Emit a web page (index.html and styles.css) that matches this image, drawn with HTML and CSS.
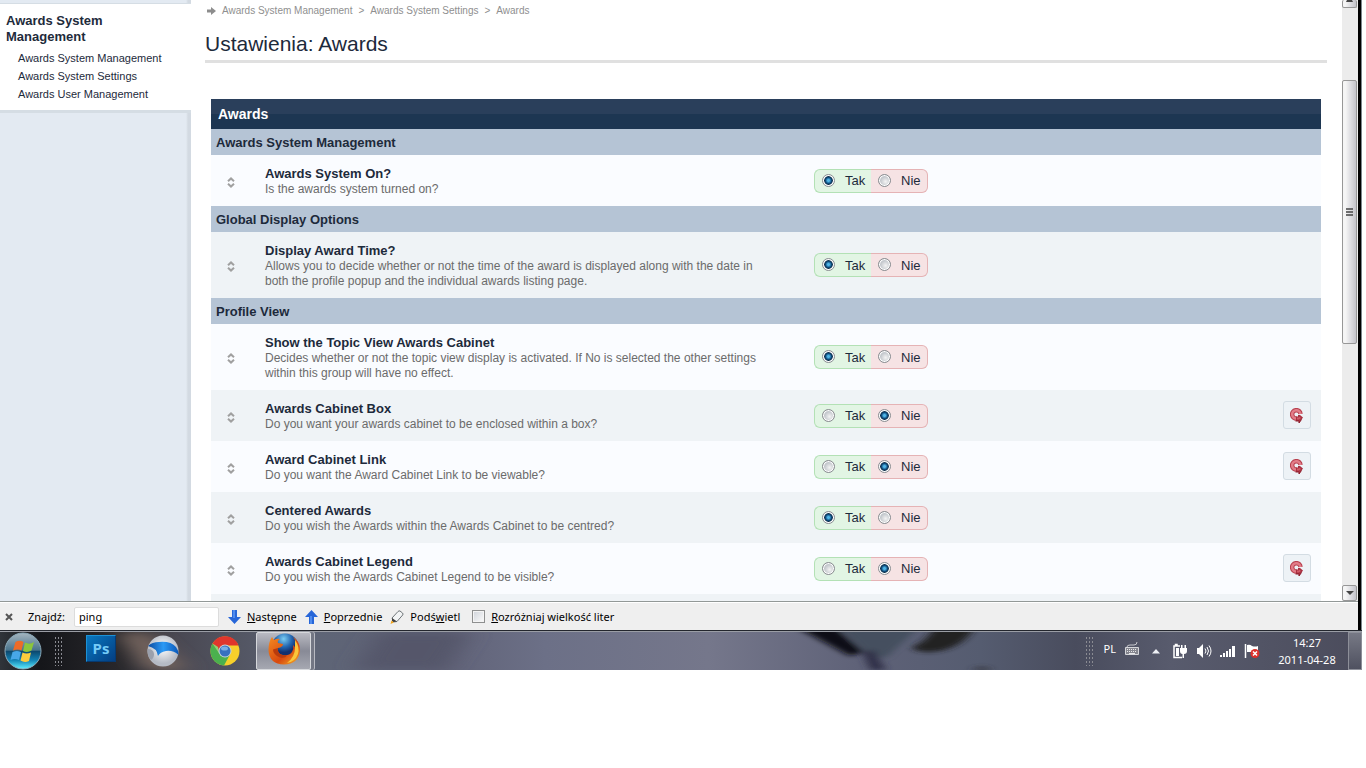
FILE: index.html
```html
<!DOCTYPE html>
<html lang="pl">
<head>
    <meta charset="UTF-8">
    <meta name="viewport" content="width=device-width, initial-scale=1.0">
    <title>Ustawienia: Awards</title>
    <link rel="stylesheet" href="styles.css">
</head>
<body>
    <svg class="symbols" aria-hidden="true">
        <symbol id="drag" viewBox="0 0 8 11">
            <path d="M1 4.2 4 1.4 7 4.2M1 6.8 4 9.6 7 6.8" fill="none" stroke="#a0a0a0" stroke-width="2"/>
        </symbol>
        <symbol id="revert" viewBox="0 0 14 16">
            <path d="M10.500 6A4.200 4.200 0 1 0 7 10.500" fill="none" stroke="#b8404e" stroke-width="4.500"/>
            <path d="M10.500 6A4.200 4.200 0 1 0 7 10.500" fill="none" stroke="#e27c88" stroke-width="2.500"/>
            <path d="M6 8.500h2V7h2l3 2.500L9 15v-2H6z" fill="#a83040"/>
            <path d="M7 9.500h2V8.500l2 1.500-2 1.500H7z" fill="#d05a66"/>
            <path d="M5.500 13H9v2l2.500-3.500" fill="none" stroke="#8c1c2a"/>
        </symbol>
    </svg>

    <div class="browser">
        <div class="page">
            <nav class="sidebar">
                <div class="menu">
                    <h2>Awards System Management</h2>
                    <ul>
                        <li><a href="#">Awards System Management</a></li>
                        <li><a href="#">Awards System Settings</a></li>
                        <li><a href="#">Awards User Management</a></li>
                    </ul>
                </div>
            </nav>

            <main class="content">
                <div class="breadcrumb">
                    <svg width="9" height="8" viewBox="0 0 9 8"><path d="M0 2.500h4V0l5 4-5 4V5.500H0z" fill="#8d8d8d"/></svg>
                    <a href="#">Awards System Management</a>
                    <span>&gt;</span>
                    <a href="#">Awards System Settings</a>
                    <span>&gt;</span>
                    <a href="#">Awards</a>
                </div>
                <h1>Ustawienia: Awards</h1>

                <table class="settings">
                    <colgroup>
                        <col class="col-drag">
                        <col class="col-text">
                        <col>
                        <col class="col-revert">
                    </colgroup>
                    <thead>
                        <tr><th colspan="4">Awards</th></tr>
                    </thead>
                    <tbody>
                        <tr class="group"><th colspan="4">Awards System Management</th></tr>
                        <tr>
                            <td class="drag"><svg><use href="#drag"/></svg></td>
                            <td><strong>Awards System On?</strong><p>Is the awards system turned on?</p></td>
                            <td><div class="yesno"><label class="yes"><input type="radio" name="system_on" checked>Tak</label><label class="no"><input type="radio" name="system_on">Nie</label></div></td>
                            <td></td>
                        </tr>
                        <tr class="group"><th colspan="4">Global Display Options</th></tr>
                        <tr class="alt">
                            <td class="drag"><svg><use href="#drag"/></svg></td>
                            <td><strong>Display Award Time?</strong><p>Allows you to decide whether or not the time of the award is displayed along with the date in both the profile popup and the individual awards listing page.</p></td>
                            <td><div class="yesno"><label class="yes"><input type="radio" name="award_time" checked>Tak</label><label class="no"><input type="radio" name="award_time">Nie</label></div></td>
                            <td></td>
                        </tr>
                        <tr class="group"><th colspan="4">Profile View</th></tr>
                        <tr>
                            <td class="drag"><svg><use href="#drag"/></svg></td>
                            <td><strong>Show the Topic View Awards Cabinet</strong><p>Decides whether or not the topic view display is activated. If No is selected the other settings within this group will have no effect.</p></td>
                            <td><div class="yesno"><label class="yes"><input type="radio" name="topic_view" checked>Tak</label><label class="no"><input type="radio" name="topic_view">Nie</label></div></td>
                            <td></td>
                        </tr>
                        <tr class="alt">
                            <td class="drag"><svg><use href="#drag"/></svg></td>
                            <td><strong>Awards Cabinet Box</strong><p>Do you want your awards cabinet to be enclosed within a box?</p></td>
                            <td><div class="yesno"><label class="yes"><input type="radio" name="cabinet_box">Tak</label><label class="no"><input type="radio" name="cabinet_box" checked>Nie</label></div></td>
                            <td><button class="revert" aria-label="Revert"><svg><use href="#revert"/></svg></button></td>
                        </tr>
                        <tr>
                            <td class="drag"><svg><use href="#drag"/></svg></td>
                            <td><strong>Award Cabinet Link</strong><p>Do you want the Award Cabinet Link to be viewable?</p></td>
                            <td><div class="yesno"><label class="yes"><input type="radio" name="cabinet_link">Tak</label><label class="no"><input type="radio" name="cabinet_link" checked>Nie</label></div></td>
                            <td><button class="revert" aria-label="Revert"><svg><use href="#revert"/></svg></button></td>
                        </tr>
                        <tr class="alt">
                            <td class="drag"><svg><use href="#drag"/></svg></td>
                            <td><strong>Centered Awards</strong><p>Do you wish the Awards within the Awards Cabinet to be centred?</p></td>
                            <td><div class="yesno"><label class="yes"><input type="radio" name="centered" checked>Tak</label><label class="no"><input type="radio" name="centered">Nie</label></div></td>
                            <td></td>
                        </tr>
                        <tr>
                            <td class="drag"><svg><use href="#drag"/></svg></td>
                            <td><strong>Awards Cabinet Legend</strong><p>Do you wish the Awards Cabinet Legend to be visible?</p></td>
                            <td><div class="yesno"><label class="yes"><input type="radio" name="legend">Tak</label><label class="no"><input type="radio" name="legend" checked>Nie</label></div></td>
                            <td><button class="revert" aria-label="Revert"><svg><use href="#revert"/></svg></button></td>
                        </tr>
                        <tr class="alt next"><td colspan="4"></td></tr>
                    </tbody>
                </table>
            </main>

            <div class="scrollbar">
                <div class="arrow up"><svg width="9" height="5" viewBox="0 0 9 5"><path d="M1 2h7L7 0H2z" fill="#444"/></svg></div>
                <div class="space-top"></div>
                <div class="thumb"><svg width="7" height="9" viewBox="0 0 7 9"><path d="M0 1h7M0 4h7M0 7h7" stroke="#444" stroke-width="1.500"/></svg></div>
                <div class="space-bottom"></div>
                <div class="arrow down"><svg width="8" height="4" viewBox="0 0 8 4"><path d="M0 0h8L4 4z" fill="#444"/></svg></div>
            </div>
        </div>

        <div class="findbar">
            <button class="close" aria-label="Zamknij"><svg width="8" height="8" viewBox="0 0 8 8"><path d="M1 1l6 6M7 1L1 7" stroke="#555" stroke-width="2"/></svg></button>
            <label for="find">Znajdź:</label>
            <input type="text" id="find" value="ping">
            <button class="next-btn"><svg width="13" height="14" viewBox="0 0 13 14"><path d="M4 0h5v7h4l-6.500 7L0 7h4z" fill="#2766d8"/><path d="M5 0h2v8H5z" fill="#4e8bee"/></svg><span><u>N</u>astępne</span></button>
            <button class="prev-btn"><svg width="13" height="14" viewBox="0 0 13 14"><path d="M4 14h5V7h4L6.500 0 0 7h4z" fill="#2766d8"/><path d="M5 6h2v8H5z" fill="#4e8bee"/></svg><span><u>P</u>oprzednie</span></button>
            <button class="mark-btn"><svg width="14" height="14" viewBox="0 0 14 14"><path d="M2 8 8 1.500Q9 .5 10 1l2.500 2q1 1 .2 2L7 11.500 3.500 12z" fill="#f2f4f5" stroke="#6f7579"/><path d="M2 8l5 3.500L3.500 12 2 11z" fill="#3e3e3e"/><path d="M1.500 10.500 4 12.500.5 14z" fill="#f2a51c"/></svg><span>Podś<u>w</u>ietl</span></button>
            <label class="case"><input type="checkbox"><span><u>R</u>ozróżniaj wielkość liter</span></label>
        </div>
    </div>

    <div class="taskbar">
        <svg class="wallpaper" viewBox="0 0 1362 38" preserveAspectRatio="none" aria-hidden="true">
            <defs>
                <linearGradient id="sky">
                    <stop offset="0" stop-color="#30343a"/><stop offset=".03" stop-color="#15161a"/>
                    <stop offset=".09" stop-color="#29282c"/><stop offset=".13" stop-color="#494852"/>
                    <stop offset=".23" stop-color="#5e6576"/><stop offset=".32" stop-color="#5f6176"/>
                    <stop offset=".4" stop-color="#6c7087"/><stop offset=".52" stop-color="#75778b"/>
                    <stop offset=".63" stop-color="#5f6278"/><stop offset=".72" stop-color="#555c70"/>
                    <stop offset=".79" stop-color="#494c5d"/><stop offset=".86" stop-color="#585b6d"/>
                    <stop offset="1" stop-color="#4b4c5c"/>
                </linearGradient>
                <filter id="soft" x="-20%" y="-60%" width="140%" height="220%"><feGaussianBlur stdDeviation="4 2"/></filter>
                <filter id="softer" x="-20%" y="-60%" width="140%" height="220%"><feGaussianBlur stdDeviation="12 5"/></filter>
            </defs>
            <path d="M0 0h1362v38H0z" fill="url(#sky)"/>
            <g filter="url(#softer)">
                <path d="M118 0h30l40 38h-42z" fill="#77665f"/>
                <path d="M380 0h90l-25 38h-90z" fill="#55566a"/>
            </g>
            <g filter="url(#soft)">
                <path d="M840-4h78l-32 30-18-4z" fill="#45505f"/>
                <path d="M798-4h38l28 24-14 4z" fill="#101012"/>
                <path d="M934-4h40q-10 18-34 23-25 3-28-4 14-5 22-19z" fill="#202024"/>
                <path d="M862 20l12-2 12 20h-16z" fill="#303048"/>
                <path d="M970 38q14-6 22 0z" fill="#34343a"/>
            </g>
        </svg>

        <button class="start" aria-label="Start">
            <svg width="40" height="38" viewBox="0 0 40 38">
                <defs>
                    <linearGradient id="orb" x2="0" y2="1"><stop offset="0" stop-color="#a5b5bf"/><stop offset=".48" stop-color="#48738c"/><stop offset=".5" stop-color="#0d466b"/><stop offset=".75" stop-color="#1282b4"/><stop offset="1" stop-color="#5ff0ff"/></linearGradient>
                </defs>
                <circle cx="20" cy="19" r="18" fill="url(#orb)" stroke="#8aa9b9"/>
                <path d="M12.500 10q4-2.500 8 0l-2 8.500q-4-2-8.500 0z" fill="#ee6b28"/>
                <path d="M22 10.500q4.500 2.500 9-.5l-2.500 8.500q-4 2.500-8.500.5z" fill="#8cc63c"/>
                <path d="M9.500 20q4.500-2 8.500 0l-2 8q-4-2-8.500 0z" fill="#47a7e8"/>
                <path d="M19.500 20.500q4 2 8.500 0l-2 8.500q-4.500 2-8.500-.5z" fill="#fccc3d"/>
            </svg>
        </button>
        <span class="grip"></span>
        <a class="app" href="#" aria-label="Photoshop"><span class="ps">Ps</span></a>
        <a class="app" href="#" aria-label="Browser">
            <svg width="32" height="32" viewBox="0 0 32 32">
                <defs>
                    <radialGradient id="ball" cx=".5" cy=".4"><stop offset="0" stop-color="#fff"/><stop offset="1" stop-color="#b5bac4"/></radialGradient>
                    <linearGradient id="band"><stop offset="0" stop-color="#0b4aa0"/><stop offset=".5" stop-color="#2d9af5"/><stop offset="1" stop-color="#0a57b8"/></linearGradient>
                </defs>
                <circle cx="16" cy="16" r="15.500" fill="url(#ball)"/>
                <path d="M1 11Q5 7 12 7q12-1 17 5 3 4 2.500 8Q26 15 19 16q-6 1-8 5-1-8-10-10z" fill="url(#band)"/>
                <path d="M.5 14q6 0 6.500 5 0 4-3 6-4-4-3.500-11z" fill="#9ba0ac"/>
            </svg>
        </a>
        <a class="app" href="#" aria-label="Chrome">
            <svg width="30" height="30" viewBox="0 0 30 30">
                <circle cx="15" cy="15" r="14.500" fill="#f7d02b"/>
                <path d="M15 15 2.500 7.500A14.500 14.500 0 0 0 14 29.500l6-11z" fill="#4bb04e"/>
                <path d="M2.500 7.500A14.500 14.500 0 0 1 28.500 9.500H15L9.500 17z" fill="#e0362c"/>
                <path d="M2.500 7.500 9.500 18 8 11z" fill="#8ed474"/>
                <circle cx="15" cy="15" r="6.500" fill="#c9d4d8"/>
                <circle cx="15" cy="15" r="5.500" fill="#3771bf"/>
                <ellipse cx="14.500" cy="12.500" rx="3.500" ry="2" fill="#7baee4"/>
            </svg>
        </a>
        <a class="app active" href="#" aria-label="Firefox">
            <svg width="32" height="32" viewBox="0 0 32 32">
                <defs>
                    <radialGradient id="globe" cx=".45" cy=".2"><stop offset="0" stop-color="#7bcdf2"/><stop offset=".6" stop-color="#2467b1"/><stop offset="1" stop-color="#12306e"/></radialGradient>
                    <linearGradient id="fox" x2="1" y2="1"><stop offset="0" stop-color="#f48a21"/><stop offset=".6" stop-color="#d8490f"/><stop offset="1" stop-color="#f7b52b"/></linearGradient>
                </defs>
                <circle cx="17" cy="14" r="13.500" fill="url(#globe)"/>
                <path d="M4 4q1 2 2 3 3-2 6-1-3 2-2 4l5 1q0 3-5 4-1 6 5 7 6 1 9-3 2-3 1-7 3 2 3 5 2-7-3-13 7 4 7 13Q31 31 16 31.500 1 31 .5 17 .5 9 4 4z" fill="url(#fox)"/>
                <path d="M27 7q5 7 3 14-3 8-11 9 8-6 8-15z" fill="#f9c63b"/>
                <path d="M10 15q-1 5 4 7l5 .5q-2 3-7 2-7-3-7-8z" fill="#b93b0d"/>
            </svg>
        </a>

        <div class="tray">
            <span class="grip"></span>
            <span class="lang">PL</span>
            <svg class="keyboard" width="16" height="14" viewBox="0 0 16 14"><path d="M3 5q0-2 3-2h4q3 0 3-3" fill="none" stroke="#c8c9ce"/><path d="M1.500 5.500h13v7h-13z" fill="#85868f" stroke="#d5d6da"/><path d="M3 7.500h10M3 9.500h10" stroke="#e8e8ea" stroke-dasharray="1 1"/><path d="M5 11.500h6" stroke="#e8e8ea"/></svg>
            <svg class="expand" width="8" height="5" viewBox="0 0 8 5"><path d="M4 0l4 4.500H0z" fill="#eef0f5"/></svg>
            <svg width="16" height="16" viewBox="0 0 16 16"><path d="M8 3H5V1.500H3.500V3H2v11.500h8" fill="none" stroke="#fff" stroke-width="1.500"/><path d="M4 5h3v8H4z" fill="#fff"/><path d="M8 5h7v3q0 3-3 3v4h-1.500v-4Q8 11 8 8zM9 2h1.500v3H9zM12.500 2H14v3h-1.500z" fill="#fff"/></svg>
            <svg width="16" height="16" viewBox="0 0 16 16"><path d="M1 5h2l4-4v14l-4-4H1z" fill="#fff"/><path d="M9 5.500q2 2.500 0 5M11 4q3 4 0 8M13 2.500q4 5.500 0 11" fill="none" stroke="#fff"/></svg>
            <svg width="16" height="16" viewBox="0 0 16 16"><path d="M0 12h2v2H0zM3 10h2v4H3zM6 8h2v6H6zM9 6h2v8H9zM12 3h3v11h-3z" fill="#fff"/></svg>
            <svg width="16" height="16" viewBox="0 0 16 16"><path d="M1.500 1v14" stroke="#fff" stroke-width="1.500"/><path d="M3 2q3-1 5 1 3 1 6 0v6H3z" fill="#fff"/><circle cx="11" cy="10.500" r="4.500" fill="#dc2f2b"/><path d="M9 8.500l4 4M13 8.500l-4 4" stroke="#fff" stroke-width="1.500"/></svg>
            <div class="clock"><span>14:27</span><span>2011-04-28</span></div>
            <button class="show-desktop" aria-label="Show desktop"></button>
        </div>
    </div>
</body>
</html>
```
FILE: styles.css
```css
*{
    box-sizing: border-box;
}
body{
    margin: 0;
    padding-right: 4px;
    background: #fff;
    color: #1d2a3b;
    font-family: "Liberation Sans", Arial, sans-serif;
    font-size: 13px;
}
h1, h2, p, ul{
    margin: 0;
    padding: 0;
}
a{
    color: inherit;
    text-decoration: none;
}
button{
    padding: 0;
    border: 0;
    background: none;
    color: inherit;
    font: inherit;
}
svg{
    display: block;
    flex: none;
}
.symbols{
    width: 0;
    height: 0;
    position: absolute;
}

/* browser window */
.browser{
    border-right: 3px solid #000;
    box-shadow: 1px 0 #7d858c;
    margin-right: 1px;
}
.page{
    display: flex;
    border-bottom: 1px solid #929897;
}
.sidebar{
    width: 191px;
    flex: none;
    padding-top: 3px;
    background: linear-gradient(to left, #d3dae2 3px, #dce3ea 4px, #e3eaf2 5px);
}
.menu{
    padding: 9px 6px 7px;
    border-top: 1px solid #d5dde4;
    border-bottom: 3px solid #d5dde4;
    background: #fff;
}
.menu h2{
    width: 130px;
    font-size: 13px;
    line-height: 16px;
    color: #1e2b3b;
}
.menu ul{
    padding: 4px 0 0 12px;
    list-style: none;
}
.menu li{
    font-size: 11px;
    line-height: 18px;
}
.content{
    flex: 1;
    padding: 4px 15px 0 14px;
}
.breadcrumb{
    display: flex;
    align-items: center;
    gap: 6px;
    padding-left: 2px;
    font-size: 10px;
    line-height: 14px;
    color: #8f8f8f;
}
h1{
    padding: 13px 0 3px;
    border-bottom: 3px solid #e0e0e0;
    font-size: 21px;
    font-weight: normal;
    line-height: 26px;
}

/* settings table */
.settings{
    width: calc(100% - 12px);
    margin: 36px 6px 0;
    table-layout: fixed;
    border-collapse: collapse;
}
.col-drag{
    width: 44px;
}
.col-text{
    width: 549px;
}
.col-revert{
    width: 48px;
}
.settings th{
    height: 26px;
    padding: 0 5px;
    background: #b5c4d5;
    text-align: left;
    font-size: 13px;
}
.settings thead th{
    height: 30px;
    padding: 0 7px;
    background: linear-gradient(#2a3f5b 50%, #1d3652 50%);
    color: #fff;
    font-size: 14px;
}
.settings td{
    padding: 11px 10px 9px;
    background: #fafcff;
    font-size: 13px;
}
.settings td + td{
    padding-right: 0;
}
.settings .alt td{
    background: #eff3f6;
}
.settings td.drag{
    padding: 3px 0 0 16px;
}
.drag svg{
    width: 8px;
    height: 11px;
}
.settings strong{
    display: block;
    line-height: 16px;
}
.settings p{
    max-width: 505px;
    color: #6b6b6b;
    font-size: 12px;
    line-height: 15px;
}
.settings .next td{
    height: 7px;
    padding: 0;
}
.settings td:nth-child(3){
    padding-top: 10px;
    padding-bottom: 10px;
}
.yesno{
    display: flex;
}
.yesno label{
    display: flex;
    align-items: center;
    width: 57px;
    height: 24px;
    padding-left: 6px;
    border: 1px solid #b3e1b5;
    border-right: 0;
    border-radius: 6px 0 0 6px;
    background: #e2f5e4;
}
.yesno .no{
    border: 1px solid #e5b3b5;
    border-left: 0;
    border-radius: 0 6px 6px 0;
    background: #f6e3e4;
}
.yesno input{
    appearance: none;
    width: 13px;
    height: 13px;
    margin: 0 10px 1px 1px;
    border: 1px solid #8a8d91;
    border-radius: 50%;
    background: radial-gradient(circle at 60% 60%, #f4f4f4, #c4c8cd 5px);
    box-shadow: inset 0 0 0 1px #fff;
}
.yesno input:checked{
    background: radial-gradient(circle at 50% 50%, #4fb5e6 1px, #0d4b7c 3px, #12324c 4px, #e8eef2 5px);
}
.revert{
    display: flex;
    align-items: center;
    justify-content: center;
    width: 28px;
    height: 28px;
    border: 1px solid #d3dce3;
    border-radius: 3px;
    background: #edf2f6;
}
.settings td:last-child{
    padding-top: 0;
    padding-bottom: 2px;
}
.revert svg{
    width: 14px;
    height: 16px;
    margin-top: 3px;
}
.settings .next td:last-child{
    padding: 0;
}

.scrollbar{
    display: flex;
    flex-direction: column;
    width: 16px;
    flex: none;
    padding-right: 1px;
    background: #ececec;
}
.space-top{
    flex: 72;
}
.thumb{
    flex: 263;
}
.space-bottom{
    flex: 241;
}
.arrow, .thumb{
    display: flex;
    align-items: center;
    justify-content: center;
    border: 1px solid #979797;
    border-radius: 2px;
    background: linear-gradient(to right, #f5f5f5 20%, #dcdce0 60%, #c3c3c9);
}
.up{
    height: 8px;
    align-items: flex-start;
    border-top: 0;
}
.down{
    height: 16px;
}

/* find bar */
.findbar{
    display: flex;
    align-items: center;
    height: 28px;
    border-top: 1px solid #fff;
    background: #efefef;
    color: #000;
    font: 11px "Noto Sans", "Open Sans", sans-serif;
}
.findbar button, .case{
    display: flex;
    align-items: center;
    gap: 6px;
}
.findbar .close{
    margin: 0 15px 0 5px;
}
.findbar input[type=text]{
    width: 145px;
    height: 20px;
    margin: 0 9px;
    padding: 0 4px;
    border: 1px solid #dcdcdc;
    border-radius: 2px;
    background: #fff;
    font: inherit;
}
.findbar button + button{
    margin-left: 8px;
}
.findbar .case{
    margin-left: 12px;
}
.case input{
    appearance: none;
    width: 13px;
    height: 13px;
    margin: 0;
    border: 1px solid #8e8f8f;
    background: linear-gradient(135deg, #cfd3da, #fbfbfb);
    box-shadow: inset 0 0 0 1px #f4f4f4;
}

/* taskbar */
.taskbar{
    position: relative;
    display: flex;
    align-items: center;
    height: 40px;
    border-top: 1px solid #23262d;
    box-shadow: inset 0 1px #9a9da5;
    color: #fff;
    font: 11px "Noto Sans", "Open Sans", sans-serif;
}
.wallpaper{
    position: absolute;
    left: 0;
    top: 1px;
    width: 100%;
    height: 38px;
    z-index: -1;
}
.start{
    margin: 0 11px 0 3px;
}
.grip{
    width: 9px;
    height: 30px;
    background: radial-gradient(circle, #8a8b92 1px, transparent 1px) 0 0 / 3px 4px;
}
.app{
    display: flex;
    align-items: center;
    justify-content: center;
    width: 62px;
    height: 38px;
}
.grip + .app{
    margin-left: 7px;
}
.ps{
    width: 30px;
    height: 27px;
    margin-bottom: 4px;
    border: 1px solid #1d92d6;
    border-right-color: #063a72;
    border-bottom-color: #063a72;
    background: linear-gradient(135deg, #0878c0, #043e82);
    color: #74ccf8;
    font-size: 15px;
    font-weight: bold;
    line-height: 24px;
    text-align: center;
}
.active{
    width: 55px;
    margin: 0;
    border: 1px solid #d6d8dc;
    border-radius: 2px;
    background: linear-gradient(#b9bac2, #888a96 50%, #a6a8b1);
    box-shadow: 3px 0 0 #737784, 4px 0 0 #b8bac2;
}
.active svg{
    margin-bottom: 3px;
}
.tray{
    display: flex;
    align-items: center;
    gap: 8px;
    margin-left: auto;
}
.tray .lang{
    margin: -4px 0 0 2px;
}
.keyboard{
    margin-top: -4px;
}
.expand{
    margin: 2px 4px 0;
}
.clock{
    display: flex;
    flex-direction: column;
    align-items: center;
    width: 66px;
    margin-left: 6px;
    line-height: 17px;
}
.show-desktop{
    width: 14px;
    height: 38px;
    border: 1px solid #8d8f99;
    background: linear-gradient(#777985, #4f5160);
}
```
